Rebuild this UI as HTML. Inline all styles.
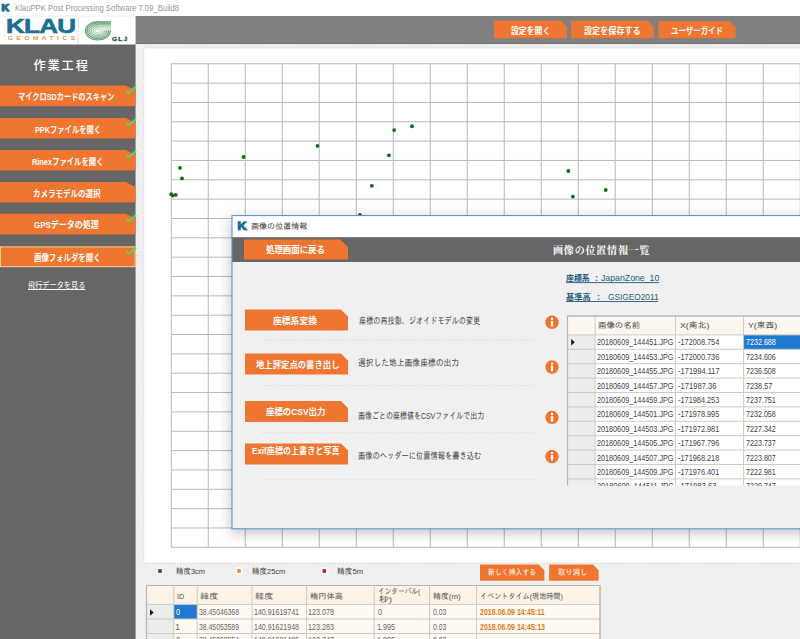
<!DOCTYPE html>
<html lang="ja"><head><meta charset="utf-8"><title>KlauPPK Post Processing Software 7.09_Build8</title>
<style>
html,body{margin:0;padding:0;}
body{width:800px;height:639px;overflow:hidden;position:relative;background:#fff;font-family:"Liberation Sans","Noto Sans CJK JP",sans-serif;}
svg{position:absolute;left:0;top:0;display:block;}
.t{position:absolute;white-space:nowrap;margin:0;padding:0;transform-origin:0 50%;}
#dshadow{position:absolute;left:232px;top:216px;width:600px;height:313px;box-shadow:0 3px 12px 1px rgba(0,0,0,.24);}
#dtab{position:absolute;left:0;top:0;width:800px;height:485.5px;overflow:hidden;}
</style></head><body>
<svg width="800" height="639" viewBox="0 0 800 639">
<rect x="0" y="0" width="800" height="639" fill="#ffffff"/>
<rect x="0" y="15.6" width="136" height="0.8" fill="#e9e9e9"/>
<rect x="135.6" y="16" width="664.4" height="28" fill="#808080"/>
<rect x="135.6" y="43" width="664.4" height="1.2" fill="#6f6f6f"/>
<rect x="135.6" y="44.2" width="664.4" height="595" fill="#efefef"/>
<rect x="0" y="44.5" width="135.6" height="595" fill="#666666"/>
<rect x="143.75" y="48" width="670" height="515" fill="#ffffff" stroke="#d0d0d0" stroke-width="1" stroke-dasharray="1.2,1.6"/>
<line x1="171.25" y1="63.75" x2="171.25" y2="547.3" stroke="#b9b9b9" stroke-width="1"/>
<line x1="208.25" y1="63.75" x2="208.25" y2="547.3" stroke="#b9b9b9" stroke-width="1"/>
<line x1="245.25" y1="63.75" x2="245.25" y2="547.3" stroke="#b9b9b9" stroke-width="1"/>
<line x1="282.25" y1="63.75" x2="282.25" y2="547.3" stroke="#b9b9b9" stroke-width="1"/>
<line x1="319.25" y1="63.75" x2="319.25" y2="547.3" stroke="#b9b9b9" stroke-width="1"/>
<line x1="356.25" y1="63.75" x2="356.25" y2="547.3" stroke="#b9b9b9" stroke-width="1"/>
<line x1="393.25" y1="63.75" x2="393.25" y2="547.3" stroke="#b9b9b9" stroke-width="1"/>
<line x1="430.25" y1="63.75" x2="430.25" y2="547.3" stroke="#b9b9b9" stroke-width="1"/>
<line x1="467.25" y1="63.75" x2="467.25" y2="547.3" stroke="#b9b9b9" stroke-width="1"/>
<line x1="504.25" y1="63.75" x2="504.25" y2="547.3" stroke="#b9b9b9" stroke-width="1"/>
<line x1="541.25" y1="63.75" x2="541.25" y2="547.3" stroke="#b9b9b9" stroke-width="1"/>
<line x1="578.25" y1="63.75" x2="578.25" y2="547.3" stroke="#b9b9b9" stroke-width="1"/>
<line x1="615.25" y1="63.75" x2="615.25" y2="547.3" stroke="#b9b9b9" stroke-width="1"/>
<line x1="652.25" y1="63.75" x2="652.25" y2="547.3" stroke="#b9b9b9" stroke-width="1"/>
<line x1="689.25" y1="63.75" x2="689.25" y2="547.3" stroke="#b9b9b9" stroke-width="1"/>
<line x1="726.25" y1="63.75" x2="726.25" y2="547.3" stroke="#b9b9b9" stroke-width="1"/>
<line x1="763.25" y1="63.75" x2="763.25" y2="547.3" stroke="#b9b9b9" stroke-width="1"/>
<line x1="800.25" y1="63.75" x2="800.25" y2="547.3" stroke="#b9b9b9" stroke-width="1"/>
<line x1="171.25" y1="63.75" x2="800" y2="63.75" stroke="#b9b9b9" stroke-width="1"/>
<line x1="171.25" y1="83.09" x2="800" y2="83.09" stroke="#b9b9b9" stroke-width="1"/>
<line x1="171.25" y1="102.43" x2="800" y2="102.43" stroke="#b9b9b9" stroke-width="1"/>
<line x1="171.25" y1="121.78" x2="800" y2="121.78" stroke="#b9b9b9" stroke-width="1"/>
<line x1="171.25" y1="141.12" x2="800" y2="141.12" stroke="#b9b9b9" stroke-width="1"/>
<line x1="171.25" y1="160.46" x2="800" y2="160.46" stroke="#b9b9b9" stroke-width="1"/>
<line x1="171.25" y1="179.80" x2="800" y2="179.80" stroke="#b9b9b9" stroke-width="1"/>
<line x1="171.25" y1="199.14" x2="800" y2="199.14" stroke="#b9b9b9" stroke-width="1"/>
<line x1="171.25" y1="218.49" x2="800" y2="218.49" stroke="#b9b9b9" stroke-width="1"/>
<line x1="171.25" y1="237.83" x2="800" y2="237.83" stroke="#b9b9b9" stroke-width="1"/>
<line x1="171.25" y1="257.17" x2="800" y2="257.17" stroke="#b9b9b9" stroke-width="1"/>
<line x1="171.25" y1="276.51" x2="800" y2="276.51" stroke="#b9b9b9" stroke-width="1"/>
<line x1="171.25" y1="295.85" x2="800" y2="295.85" stroke="#b9b9b9" stroke-width="1"/>
<line x1="171.25" y1="315.20" x2="800" y2="315.20" stroke="#b9b9b9" stroke-width="1"/>
<line x1="171.25" y1="334.54" x2="800" y2="334.54" stroke="#b9b9b9" stroke-width="1"/>
<line x1="171.25" y1="353.88" x2="800" y2="353.88" stroke="#b9b9b9" stroke-width="1"/>
<line x1="171.25" y1="373.22" x2="800" y2="373.22" stroke="#b9b9b9" stroke-width="1"/>
<line x1="171.25" y1="392.56" x2="800" y2="392.56" stroke="#b9b9b9" stroke-width="1"/>
<line x1="171.25" y1="411.91" x2="800" y2="411.91" stroke="#b9b9b9" stroke-width="1"/>
<line x1="171.25" y1="431.25" x2="800" y2="431.25" stroke="#b9b9b9" stroke-width="1"/>
<line x1="171.25" y1="450.59" x2="800" y2="450.59" stroke="#b9b9b9" stroke-width="1"/>
<line x1="171.25" y1="469.93" x2="800" y2="469.93" stroke="#b9b9b9" stroke-width="1"/>
<line x1="171.25" y1="489.27" x2="800" y2="489.27" stroke="#b9b9b9" stroke-width="1"/>
<line x1="171.25" y1="508.62" x2="800" y2="508.62" stroke="#b9b9b9" stroke-width="1"/>
<line x1="171.25" y1="527.96" x2="800" y2="527.96" stroke="#b9b9b9" stroke-width="1"/>
<line x1="171.25" y1="547.30" x2="800" y2="547.30" stroke="#b9b9b9" stroke-width="1"/>
<circle cx="171.2" cy="194.2" r="1.9" fill="#0d6b0d"/>
<circle cx="172.8" cy="195.6" r="1.9" fill="#0d6b0d"/>
<circle cx="175.8" cy="194.9" r="1.9" fill="#0d6b0d"/>
<circle cx="180" cy="167.9" r="1.9" fill="#0d6b0d"/>
<circle cx="182" cy="178.4" r="1.9" fill="#0d6b0d"/>
<circle cx="243.6" cy="157" r="1.9" fill="#0d6b0d"/>
<circle cx="317.5" cy="145.9" r="1.9" fill="#0d6b0d"/>
<circle cx="371.8" cy="185.8" r="1.9" fill="#0d6b0d"/>
<circle cx="388.9" cy="155.3" r="1.9" fill="#0d6b0d"/>
<circle cx="394.2" cy="130.1" r="1.9" fill="#0d6b0d"/>
<circle cx="412" cy="126.25" r="1.9" fill="#0d6b0d"/>
<circle cx="359.9" cy="215" r="1.9" fill="#0d6b0d"/>
<circle cx="568.3" cy="171" r="1.9" fill="#0d6b0d"/>
<circle cx="572.9" cy="196.6" r="1.9" fill="#0d6b0d"/>
<circle cx="605.75" cy="190" r="1.9" fill="#0d6b0d"/>
<polygon points="494,20.8 561,20.8 567,26.8 567,38.2 494,38.2" fill="#ef7630"/>
<polygon points="571.2,20.8 647.8000000000001,20.8 653.8000000000001,26.8 653.8000000000001,38.2 571.2,38.2" fill="#ef7630"/>
<polygon points="658.3,21.3 729.5999999999999,21.3 735.5999999999999,27.3 735.5999999999999,38.2 658.3,38.2" fill="#ef7630"/>
<polygon points="0,85.5 125.6,85.5 135.6,90.5 135.6,106.2 0,106.2" fill="#ef7630"/>
<polyline points="126.6,90.4 129.1,92.9 136,86.4" fill="none" stroke="#5fd45f" stroke-width="1.9"/>
<polygon points="0,117.9 125.6,117.9 135.6,122.9 135.6,138.6 0,138.6" fill="#ef7630"/>
<polyline points="126.6,122.80000000000001 129.1,125.30000000000001 136,118.80000000000001" fill="none" stroke="#5fd45f" stroke-width="1.9"/>
<polygon points="0,149.9 125.6,149.9 135.6,154.9 135.6,170.6 0,170.6" fill="#ef7630"/>
<polyline points="126.6,154.8 129.1,157.3 136,150.8" fill="none" stroke="#5fd45f" stroke-width="1.9"/>
<polygon points="0,181.9 125.6,181.9 135.6,186.9 135.6,202.6 0,202.6" fill="#ef7630"/>
<polygon points="0,213.8 125.6,213.8 135.6,218.8 135.6,234.5 0,234.5" fill="#ef7630"/>
<polyline points="126.6,218.70000000000002 129.1,221.20000000000002 136,214.70000000000002" fill="none" stroke="#5fd45f" stroke-width="1.9"/>
<rect x="0.5" y="246.9" width="134.6" height="19.8" fill="#ef7630" stroke="#f6d98c" stroke-width="1"/>
<polyline points="126.6,251.5 129.1,254.0 136,247.5" fill="none" stroke="#5fd45f" stroke-width="1.9"/>
<path d="M1.9 4 h2.5 v2.6 l2.4-2.6 h2.9 l-3.1 3.2 3.3 4.1 h-3.1 l-2-2.7 -0.4 0.4 v2.3 h-2.5z" fill="#1c6e8c" stroke="#1c6e8c" stroke-width="0.6" stroke-linejoin="round"/>
<rect x="77.8" y="17" width="0.8" height="27" fill="#d8d8d8"/>
<defs><radialGradient id="gg" cx="0.5" cy="0.52" r="0.56"><stop offset="0" stop-color="#ffffff"/><stop offset="0.25" stop-color="#eef7ee"/><stop offset="0.65" stop-color="#c4dfc8"/><stop offset="1" stop-color="#86b890"/></radialGradient><clipPath id="gc"><path d="M97.9 21.1 H111 V30.8 A13.1 9.75 0 1 1 97.9 21.1 Z"/></clipPath></defs>
<path d="M97.9 21.1 H111 V30.8 A13.1 9.75 0 1 1 97.9 21.1 Z" fill="url(#gg)"/>
<g clip-path="url(#gc)"><ellipse cx="97.9" cy="30.85" rx="12.70" ry="9.40" fill="none" stroke="#3f8353" stroke-opacity="0.85" stroke-width="0.85"/><ellipse cx="97.9" cy="30.85" rx="10.70" ry="7.92" fill="none" stroke="#3f8353" stroke-opacity="0.74" stroke-width="0.85"/><ellipse cx="97.9" cy="30.85" rx="8.70" ry="6.44" fill="none" stroke="#3f8353" stroke-opacity="0.63" stroke-width="0.85"/><ellipse cx="97.9" cy="30.85" rx="6.70" ry="4.96" fill="none" stroke="#3f8353" stroke-opacity="0.52" stroke-width="0.85"/><ellipse cx="97.9" cy="30.85" rx="4.70" ry="3.48" fill="none" stroke="#3f8353" stroke-opacity="0.41" stroke-width="0.85"/><ellipse cx="97.9" cy="30.85" rx="2.70" ry="2.00" fill="none" stroke="#3f8353" stroke-opacity="0.30" stroke-width="0.85"/><rect x="97.9" y="21" width="14" height="3.6" fill="#7fb48a"/><rect x="97.9" y="24.6" width="14" height="2.6" fill="#b5d6ba"/><rect x="99.5" y="27.2" width="12" height="3.4" fill="#e2f0e3" fill-opacity="0.85"/></g>
<rect x="156.5" y="567.5" width="7" height="7" fill="#ffffff"/>
<rect x="158.2" y="569.2" width="3.6" height="3.6" fill="#0d5f0d"/>
<rect x="235.5" y="567.5" width="7" height="7" fill="#ffffff"/>
<rect x="237.2" y="569.2" width="3.6" height="3.6" fill="#e8873a"/>
<rect x="320.8" y="567.5" width="7" height="7" fill="#ffffff"/>
<rect x="322.5" y="569.2" width="3.6" height="3.6" fill="#c0202a"/>
<polygon points="480,564.5 538.6,564.5 544.4,570.3 544.4,580.7 480,580.7" fill="#ef7630"/>
<polygon points="549.1,564.5 592.8000000000001,564.5 598.6,570.3 598.6,580.7 549.1,580.7" fill="#ef7630"/>
<rect x="146.5" y="585.5" width="453.5" height="18.899999999999977" fill="#fcf3e5"/>
<rect x="146.5" y="604.4" width="453.5" height="43.60000000000002" fill="#fef9f2"/>
<rect x="146.5" y="604.4" width="27.30000000000001" height="43.60000000000002" fill="#ececec"/>
<rect x="173.8" y="604.4" width="23.399999999999977" height="14.600000000000023" fill="#1f78d1"/>
<line x1="146.5" y1="585.5" x2="146.5" y2="648" stroke="#cfcac2" stroke-width="1"/>
<line x1="173.8" y1="585.5" x2="173.8" y2="648" stroke="#cfcac2" stroke-width="1"/>
<line x1="197.2" y1="585.5" x2="197.2" y2="648" stroke="#cfcac2" stroke-width="1"/>
<line x1="252" y1="585.5" x2="252" y2="648" stroke="#cfcac2" stroke-width="1"/>
<line x1="306.6" y1="585.5" x2="306.6" y2="648" stroke="#cfcac2" stroke-width="1"/>
<line x1="374.2" y1="585.5" x2="374.2" y2="648" stroke="#cfcac2" stroke-width="1"/>
<line x1="429.6" y1="585.5" x2="429.6" y2="648" stroke="#cfcac2" stroke-width="1"/>
<line x1="476.5" y1="585.5" x2="476.5" y2="648" stroke="#cfcac2" stroke-width="1"/>
<line x1="600" y1="585.5" x2="600" y2="648" stroke="#cfcac2" stroke-width="1"/>
<line x1="146.5" y1="585.5" x2="600" y2="585.5" stroke="#cfcac2" stroke-width="1"/>
<line x1="146.5" y1="604.4" x2="600" y2="604.4" stroke="#cfcac2" stroke-width="1"/>
<line x1="146.5" y1="619" x2="600" y2="619" stroke="#cfcac2" stroke-width="1"/>
<line x1="146.5" y1="633.5" x2="600" y2="633.5" stroke="#cfcac2" stroke-width="1"/>
<path d="M146.5 640 V585.5 H600 V640" fill="none" stroke="#b4b4b4" stroke-width="1.1"/>
<polygon points="150,609.2 150,615.8 153.6,612.5" fill="#111"/>
</svg>
<span id="t0" class="t" style="font-family:'Liberation Sans','Noto Sans CJK JP',sans-serif;font-size:8.8px;font-weight:bold;color:#fff;left:511.00px;top:25.14px;line-height:12.32px;transform:scaleX(0.8932);">設定を開く</span>
<span id="t1" class="t" style="font-family:'Liberation Sans','Noto Sans CJK JP',sans-serif;font-size:8.8px;font-weight:bold;color:#fff;left:584.00px;top:25.14px;line-height:12.32px;transform:scaleX(0.9201);">設定を保存する</span>
<span id="t2" class="t" style="font-family:'Liberation Sans','Noto Sans CJK JP',sans-serif;font-size:8.8px;font-weight:bold;color:#fff;left:670.50px;top:24.94px;line-height:12.32px;transform:scaleX(0.8468);">ユーザーガイド</span>
<span id="t3" class="t" style="font-family:'Liberation Sans','Noto Sans CJK JP',sans-serif;font-size:9.3px;font-weight:bold;color:#fff;left:18.25px;top:90.99px;line-height:13.02px;transform:scaleX(0.7756);">マイクロSDカードのスキャン</span>
<span id="t4" class="t" style="font-family:'Liberation Sans','Noto Sans CJK JP',sans-serif;font-size:9.3px;font-weight:bold;color:#fff;left:35.00px;top:123.59px;line-height:13.02px;transform:scaleX(0.7852);">PPKファイルを開く</span>
<span id="t5" class="t" style="font-family:'Liberation Sans','Noto Sans CJK JP',sans-serif;font-size:9.3px;font-weight:bold;color:#fff;left:32.25px;top:155.59px;line-height:13.02px;transform:scaleX(0.7910);">Rinexファイルを開く</span>
<span id="t6" class="t" style="font-family:'Liberation Sans','Noto Sans CJK JP',sans-serif;font-size:9.3px;font-weight:bold;color:#fff;left:33.00px;top:187.59px;line-height:13.02px;transform:scaleX(0.8074);">カメラモデルの選択</span>
<span id="t7" class="t" style="font-family:'Liberation Sans','Noto Sans CJK JP',sans-serif;font-size:9.3px;font-weight:bold;color:#fff;left:34.00px;top:219.19px;line-height:13.02px;transform:scaleX(0.8587);">GPSデータの処理</span>
<span id="t8" class="t" style="font-family:'Liberation Sans','Noto Sans CJK JP',sans-serif;font-size:9.3px;font-weight:bold;color:#fff;left:34.00px;top:252.39px;line-height:13.02px;transform:scaleX(0.7951);">画像フォルダを開く</span>
<span id="t9" class="t" style="font-family:'Liberation Sans','Noto Sans CJK JP',sans-serif;font-size:12.2px;font-weight:500;color:#fff;left:33.50px;top:57.96px;line-height:17.08px;letter-spacing:1.867px;">作業工程</span>
<span id="t10" class="t" style="font-family:'Liberation Sans','Noto Sans CJK JP',sans-serif;font-size:8.5px;font-weight:normal;color:#fff;left:27.50px;top:280.05px;line-height:11.9px;transform:scaleX(0.8426);text-decoration:underline;">飛行データを見る</span>
<span id="t11" class="t" style="font-family:'Liberation Sans','Noto Sans CJK JP',sans-serif;font-size:8.8px;font-weight:normal;color:#979797;left:15.00px;top:1.64px;line-height:12.32px;transform:scaleX(0.8764);">KlauPPK Post Processing Software 7.09_Build8</span>
<span id="t12" class="t" style="font-family:'Liberation Sans',sans-serif;font-size:19.4px;font-weight:bold;color:#1b6f90;left:6.00px;top:13.22px;line-height:27.16px;transform:scaleX(1.3441);-webkit-text-stroke:0.6px #1b6f90;letter-spacing:-0.6px;">KLAU</span>
<span id="t13" class="t" style="font-family:'Liberation Sans',sans-serif;font-size:6.2px;font-weight:normal;color:#dc8428;left:8.00px;top:34.46px;line-height:8.68px;letter-spacing:3.775px;-webkit-text-stroke:0.15px #dc8428;">GEOMATICS</span>
<span id="t14" class="t" style="font-family:'Liberation Sans',sans-serif;font-size:4.8px;font-weight:bold;color:#2f5a42;left:112.00px;top:37.24px;line-height:6.72px;transform:scaleX(1.4021);letter-spacing:0.8px;-webkit-text-stroke:0.3px #2f5a42;">GLJ</span>
<span id="t15" class="t" style="font-family:'Liberation Sans','IPAGothic','Noto Sans CJK JP',sans-serif;font-size:8px;font-weight:normal;color:#444;left:175.50px;top:566.10px;line-height:11.2px;transform:scaleX(0.9339);">精度3cm</span>
<span id="t16" class="t" style="font-family:'Liberation Sans','IPAGothic','Noto Sans CJK JP',sans-serif;font-size:8px;font-weight:normal;color:#444;left:252.00px;top:566.10px;line-height:11.2px;transform:scaleX(0.9374);">精度25cm</span>
<span id="t17" class="t" style="font-family:'Liberation Sans','IPAGothic','Noto Sans CJK JP',sans-serif;font-size:8px;font-weight:normal;color:#444;left:336.50px;top:566.10px;line-height:11.2px;transform:scaleX(0.9630);">精度5m</span>
<span id="t18" class="t" style="font-family:'Liberation Sans','IPAGothic','Noto Sans CJK JP',sans-serif;font-size:8px;font-weight:normal;color:#fff;left:487.50px;top:567.30px;line-height:11.2px;transform:scaleX(0.8596);">新しく挿入する</span>
<span id="t19" class="t" style="font-family:'Liberation Sans','IPAGothic','Noto Sans CJK JP',sans-serif;font-size:8px;font-weight:normal;color:#fff;left:558.25px;top:567.30px;line-height:11.2px;transform:scaleX(0.9204);">取り消し</span>
<span id="t20" class="t" style="font-family:'Liberation Sans','IPAGothic','Noto Sans CJK JP',sans-serif;font-size:8px;font-weight:normal;color:#555;left:177.00px;top:590.90px;line-height:11.2px;transform:scaleX(0.9056);">ID</span>
<span id="t21" class="t" style="font-family:'Liberation Sans','IPAGothic','Noto Sans CJK JP',sans-serif;font-size:8px;font-weight:normal;color:#555;left:199.50px;top:590.90px;line-height:11.2px;transform:scaleX(1.1489);">緯度</span>
<span id="t22" class="t" style="font-family:'Liberation Sans','IPAGothic','Noto Sans CJK JP',sans-serif;font-size:8px;font-weight:normal;color:#555;left:254.50px;top:590.90px;line-height:11.2px;transform:scaleX(1.1489);">経度</span>
<span id="t23" class="t" style="font-family:'Liberation Sans','IPAGothic','Noto Sans CJK JP',sans-serif;font-size:8px;font-weight:normal;color:#555;left:310.00px;top:590.90px;line-height:11.2px;transform:scaleX(1.0327);">楕円体高</span>
<span id="t24" class="t" style="font-family:'Liberation Sans','IPAGothic','Noto Sans CJK JP',sans-serif;font-size:8px;font-weight:normal;color:#555;left:377.50px;top:585.90px;line-height:11.2px;transform:scaleX(0.8322);">インターバル(</span>
<span id="t25" class="t" style="font-family:'Liberation Sans','IPAGothic','Noto Sans CJK JP',sans-serif;font-size:8px;font-weight:normal;color:#555;left:378.50px;top:594.30px;line-height:11.2px;transform:scaleX(1.2227);">秒)</span>
<span id="t26" class="t" style="font-family:'Liberation Sans','IPAGothic','Noto Sans CJK JP',sans-serif;font-size:8px;font-weight:normal;color:#555;left:433.00px;top:590.90px;line-height:11.2px;transform:scaleX(0.9862);">精度(m)</span>
<span id="t27" class="t" style="font-family:'Liberation Sans','IPAGothic','Noto Sans CJK JP',sans-serif;font-size:8px;font-weight:normal;color:#555;left:480.00px;top:590.90px;line-height:11.2px;transform:scaleX(0.8870);">イベントタイム(現地時間)</span>
<span id="t28" class="t" style="font-family:'Liberation Sans','IPAGothic','Noto Sans CJK JP',sans-serif;font-size:8.6px;font-weight:normal;color:#fff;left:176.00px;top:605.98px;line-height:12.04px;transform:scaleX(0.8688);">0</span>
<span id="t29" class="t" style="font-family:'Liberation Sans','IPAGothic','Noto Sans CJK JP',sans-serif;font-size:8.6px;font-weight:normal;color:#666;left:199.00px;top:605.98px;line-height:12.04px;transform:scaleX(0.7964);">38.45046368</span>
<span id="t30" class="t" style="font-family:'Liberation Sans','IPAGothic','Noto Sans CJK JP',sans-serif;font-size:8.6px;font-weight:normal;color:#666;left:254.00px;top:605.98px;line-height:12.04px;transform:scaleX(0.8187);">140.91619741</span>
<span id="t31" class="t" style="font-family:'Liberation Sans','IPAGothic','Noto Sans CJK JP',sans-serif;font-size:8.6px;font-weight:normal;color:#666;left:308.00px;top:605.98px;line-height:12.04px;transform:scaleX(0.8406);">123.078</span>
<span id="t32" class="t" style="font-family:'Liberation Sans','IPAGothic','Noto Sans CJK JP',sans-serif;font-size:8.6px;font-weight:normal;color:#666;left:377.50px;top:605.98px;line-height:12.04px;transform:scaleX(0.8688);">0</span>
<span id="t33" class="t" style="font-family:'Liberation Sans','IPAGothic','Noto Sans CJK JP',sans-serif;font-size:8.6px;font-weight:normal;color:#666;left:432.50px;top:605.98px;line-height:12.04px;transform:scaleX(0.7909);">0.03</span>
<span id="t34" class="t" style="font-family:'Liberation Sans',sans-serif;font-size:8.8px;font-weight:bold;color:#e07a22;left:480.00px;top:606.24px;line-height:12.32px;transform:scaleX(0.7952);">2018.06.09 14:45:11</span>
<span id="t35" class="t" style="font-family:'Liberation Sans','IPAGothic','Noto Sans CJK JP',sans-serif;font-size:8.6px;font-weight:normal;color:#666;left:175.00px;top:620.58px;line-height:12.04px;transform:scaleX(1.0860);">1</span>
<span id="t36" class="t" style="font-family:'Liberation Sans','IPAGothic','Noto Sans CJK JP',sans-serif;font-size:8.6px;font-weight:normal;color:#666;left:199.00px;top:620.58px;line-height:12.04px;transform:scaleX(0.7964);">38.45053589</span>
<span id="t37" class="t" style="font-family:'Liberation Sans','IPAGothic','Noto Sans CJK JP',sans-serif;font-size:8.6px;font-weight:normal;color:#666;left:254.00px;top:620.58px;line-height:12.04px;transform:scaleX(0.8187);">140.91621948</span>
<span id="t38" class="t" style="font-family:'Liberation Sans','IPAGothic','Noto Sans CJK JP',sans-serif;font-size:8.6px;font-weight:normal;color:#666;left:308.00px;top:620.58px;line-height:12.04px;transform:scaleX(0.8406);">123.283</span>
<span id="t39" class="t" style="font-family:'Liberation Sans','IPAGothic','Noto Sans CJK JP',sans-serif;font-size:8.6px;font-weight:normal;color:#666;left:376.50px;top:620.58px;line-height:12.04px;transform:scaleX(0.8412);">1.995</span>
<span id="t40" class="t" style="font-family:'Liberation Sans','IPAGothic','Noto Sans CJK JP',sans-serif;font-size:8.6px;font-weight:normal;color:#666;left:432.50px;top:620.58px;line-height:12.04px;transform:scaleX(0.7909);">0.03</span>
<span id="t41" class="t" style="font-family:'Liberation Sans',sans-serif;font-size:8.8px;font-weight:bold;color:#e07a22;left:480.00px;top:620.84px;line-height:12.32px;transform:scaleX(0.7952);">2018.06.09 14:45:13</span>
<span id="t42" class="t" style="font-family:'Liberation Sans','IPAGothic','Noto Sans CJK JP',sans-serif;font-size:8.6px;font-weight:normal;color:#666;left:176.00px;top:634.38px;line-height:12.04px;transform:scaleX(0.8688);">2</span>
<span id="t43" class="t" style="font-family:'Liberation Sans','IPAGothic','Noto Sans CJK JP',sans-serif;font-size:8.6px;font-weight:normal;color:#666;left:199.00px;top:634.38px;line-height:12.04px;transform:scaleX(0.7964);">38.45059554</span>
<span id="t44" class="t" style="font-family:'Liberation Sans','IPAGothic','Noto Sans CJK JP',sans-serif;font-size:8.6px;font-weight:normal;color:#666;left:254.00px;top:634.38px;line-height:12.04px;transform:scaleX(0.8187);">140.91621486</span>
<span id="t45" class="t" style="font-family:'Liberation Sans','IPAGothic','Noto Sans CJK JP',sans-serif;font-size:8.6px;font-weight:normal;color:#666;left:308.00px;top:634.38px;line-height:12.04px;transform:scaleX(0.8406);">123.347</span>
<span id="t46" class="t" style="font-family:'Liberation Sans','IPAGothic','Noto Sans CJK JP',sans-serif;font-size:8.6px;font-weight:normal;color:#666;left:376.50px;top:634.38px;line-height:12.04px;transform:scaleX(0.8412);">1.995</span>
<span id="t47" class="t" style="font-family:'Liberation Sans','IPAGothic','Noto Sans CJK JP',sans-serif;font-size:8.6px;font-weight:normal;color:#666;left:432.50px;top:634.38px;line-height:12.04px;transform:scaleX(0.7909);">0.03</span>
<span id="t48" class="t" style="font-family:'Liberation Sans',sans-serif;font-size:8.8px;font-weight:bold;color:#e07a22;left:480.00px;top:635.64px;line-height:12.32px;transform:scaleX(0.7952);">2018.06.09 14:45:15</span>
<div id="dshadow"></div>
<svg width="800" height="639" viewBox="0 0 800 639">
<rect x="232" y="215.6" width="580" height="313.19999999999993" fill="#f0f0f0"/>
<rect x="232" y="215.6" width="580" height="21.6" fill="#ffffff"/>
<rect x="232" y="237.2" width="580" height="24.8" fill="#666666"/>
<rect x="232" y="215.6" width="580" height="313.19999999999993" fill="none" stroke="#4b8fd6" stroke-width="1"/>
<path d="M238 221.6 h2.6 v3.2 l3.2-3.2 h3.2 l-3.9 3.8 4.3 4.6 h-3.4 l-2.8-3.2 -0.6 0.6 v2.6 h-2.6z" fill="#1c6e8c" stroke="#1c6e8c" stroke-width="0.6" stroke-linejoin="round"/>
<polygon points="244,239.6 340,239.6 348,247.0 348,259.6 244,259.6" fill="#ef7630"/>
<polygon points="245,309.4 341,309.4 348,316.4 348,330.4 245,330.4" fill="#ef7630"/>
<polygon points="245,353.6 341,353.6 348,360.6 348,374.6 245,374.6" fill="#ef7630"/>
<polygon points="245,401 341,401 348,408 348,422 245,422" fill="#ef7630"/>
<polygon points="245,443.4 341,443.4 348,450.4 348,464.4 245,464.4" fill="#ef7630"/>
<line x1="262" y1="340.2" x2="535.5" y2="340.2" stroke="#dcdcdc" stroke-width="1" stroke-dasharray="1.5,1.5"/>
<line x1="262" y1="385.6" x2="535.5" y2="385.6" stroke="#dcdcdc" stroke-width="1" stroke-dasharray="1.5,1.5"/>
<line x1="262" y1="432.8" x2="535.5" y2="432.8" stroke="#dcdcdc" stroke-width="1" stroke-dasharray="1.5,1.5"/>
<line x1="262" y1="479.8" x2="535.5" y2="479.8" stroke="#dcdcdc" stroke-width="1" stroke-dasharray="1.5,1.5"/>
<circle cx="552" cy="322.2" r="6.7" fill="#ef7630"/>
<circle cx="552" cy="318.8" r="1.25" fill="#fff"/>
<rect x="550.9" y="320.9" width="2.2" height="5.6" fill="#fff"/>
<circle cx="552" cy="367" r="6.7" fill="#ef7630"/>
<circle cx="552" cy="363.6" r="1.25" fill="#fff"/>
<rect x="550.9" y="365.7" width="2.2" height="5.6" fill="#fff"/>
<circle cx="552" cy="417.4" r="6.7" fill="#ef7630"/>
<circle cx="552" cy="414.0" r="1.25" fill="#fff"/>
<rect x="550.9" y="416.09999999999997" width="2.2" height="5.6" fill="#fff"/>
<circle cx="552" cy="456.5" r="6.7" fill="#ef7630"/>
<circle cx="552" cy="453.1" r="1.25" fill="#fff"/>
<rect x="550.9" y="455.2" width="2.2" height="5.6" fill="#fff"/>
<clipPath id="tc"><rect x="560" y="310" width="240" height="175.5"/></clipPath>
<g clip-path="url(#tc)"><rect x="567.5" y="316" width="260" height="18.899999999999977" fill="#fdf8ef"/><rect x="567.5" y="334.9" width="260" height="200" fill="#ffffff"/><rect x="567.5" y="334.9" width="27.600000000000023" height="200" fill="#ececec"/><rect x="743.6" y="334.9" width="80" height="14.4" fill="#1f78d1"/><line x1="567.5" y1="316" x2="567.5" y2="500" stroke="#cfcac2" stroke-width="1"/><line x1="595.1" y1="316" x2="595.1" y2="500" stroke="#cfcac2" stroke-width="1"/><line x1="675.5" y1="316" x2="675.5" y2="500" stroke="#cfcac2" stroke-width="1"/><line x1="743.6" y1="316" x2="743.6" y2="500" stroke="#cfcac2" stroke-width="1"/><line x1="567.5" y1="316.00" x2="800" y2="316.00" stroke="#cfcac2" stroke-width="1"/><line x1="567.5" y1="334.90" x2="800" y2="334.90" stroke="#cfcac2" stroke-width="1"/><line x1="567.5" y1="349.30" x2="800" y2="349.30" stroke="#cfcac2" stroke-width="1"/><line x1="567.5" y1="363.70" x2="800" y2="363.70" stroke="#cfcac2" stroke-width="1"/><line x1="567.5" y1="378.10" x2="800" y2="378.10" stroke="#cfcac2" stroke-width="1"/><line x1="567.5" y1="392.50" x2="800" y2="392.50" stroke="#cfcac2" stroke-width="1"/><line x1="567.5" y1="406.90" x2="800" y2="406.90" stroke="#cfcac2" stroke-width="1"/><line x1="567.5" y1="421.30" x2="800" y2="421.30" stroke="#cfcac2" stroke-width="1"/><line x1="567.5" y1="435.70" x2="800" y2="435.70" stroke="#cfcac2" stroke-width="1"/><line x1="567.5" y1="450.10" x2="800" y2="450.10" stroke="#cfcac2" stroke-width="1"/><line x1="567.5" y1="464.50" x2="800" y2="464.50" stroke="#cfcac2" stroke-width="1"/><line x1="567.5" y1="478.90" x2="800" y2="478.90" stroke="#cfcac2" stroke-width="1"/><line x1="567.5" y1="493.30" x2="800" y2="493.30" stroke="#cfcac2" stroke-width="1"/><path d="M567.5 500 V316 H800" fill="none" stroke="#b4b4b4" stroke-width="1.2"/><polygon points="571.2,338.9 571.2,345.5 574.8,342.2" fill="#111"/></g>
<rect x="566" y="282.2" width="93" height="0.9" fill="#1f5d7e"/>
<rect x="566" y="301" width="92" height="0.9" fill="#1f5d7e"/>
</svg>
<span id="t49" class="t" style="font-family:'Liberation Sans','IPAGothic','Noto Sans CJK JP',sans-serif;font-size:8px;font-weight:normal;color:#333;left:251.00px;top:220.70px;line-height:11.2px;transform:scaleX(1.0075);">画像の位置情報</span>
<span id="t50" class="t" style="font-family:'Liberation Sans','Noto Sans CJK JP',sans-serif;font-size:9px;font-weight:bold;color:#fff;left:266.00px;top:244.20px;line-height:12.6px;transform:scaleX(0.9355);">処理画面に戻る</span>
<span id="t51" class="t" style="font-family:'Liberation Serif','Noto Serif CJK JP',serif;font-size:10px;font-weight:bold;color:#fff;left:553.00px;top:244.00px;line-height:14.0px;letter-spacing:0.825px;">画像の位置情報一覧</span>
<span id="t52" class="t" style="font-family:'Liberation Sans','Noto Sans CJK JP',sans-serif;font-size:8.2px;font-weight:bold;color:#1f5d7e;left:566.00px;top:273.26px;line-height:11.48px;transform:scaleX(0.9671);">座標系</span>
<span id="t53" class="t" style="font-family:'Liberation Sans','Noto Sans CJK JP',sans-serif;font-size:9px;font-weight:bold;color:#1f5d7e;left:595.00px;top:272.30px;line-height:12.6px;">:</span>
<span id="t54" class="t" style="font-family:'Liberation Sans','Noto Sans CJK JP',sans-serif;font-size:9.2px;font-weight:normal;color:#1f5d7e;left:601.00px;top:272.36px;line-height:12.88px;transform:scaleX(0.9508);">JapanZone_10</span>
<span id="t55" class="t" style="font-family:'Liberation Sans','Noto Sans CJK JP',sans-serif;font-size:8.2px;font-weight:bold;color:#1f5d7e;left:566.00px;top:292.26px;line-height:11.48px;">基準高</span>
<span id="t56" class="t" style="font-family:'Liberation Sans','Noto Sans CJK JP',sans-serif;font-size:9px;font-weight:bold;color:#1f5d7e;left:597.00px;top:291.30px;line-height:12.6px;">:</span>
<span id="t57" class="t" style="font-family:'Liberation Sans','Noto Sans CJK JP',sans-serif;font-size:9.2px;font-weight:normal;color:#1f5d7e;left:608.00px;top:291.36px;line-height:12.88px;transform:scaleX(0.9021);">GSIGEO2011</span>
<span id="t58" class="t" style="font-family:'Liberation Sans','Noto Sans CJK JP',sans-serif;font-size:9px;font-weight:bold;color:#fff;left:273.00px;top:315.00px;line-height:12.6px;transform:scaleX(0.9778);">座標系変換</span>
<span id="t59" class="t" style="font-family:'Liberation Sans','Noto Sans CJK JP',sans-serif;font-size:9px;font-weight:bold;color:#fff;left:256.00px;top:359.20px;line-height:12.6px;transform:scaleX(0.9281);">地上評定点の書き出し</span>
<span id="t60" class="t" style="font-family:'Liberation Sans','Noto Sans CJK JP',sans-serif;font-size:9px;font-weight:bold;color:#fff;left:266.00px;top:406.40px;line-height:12.6px;transform:scaleX(0.9365);">座標のCSV出力</span>
<span id="t61" class="t" style="font-family:'Liberation Sans','Noto Sans CJK JP',sans-serif;font-size:9px;font-weight:bold;color:#fff;left:252.00px;top:445.40px;line-height:12.6px;transform:scaleX(0.8969);">Exif座標の上書きと写真</span>
<span id="t62" class="t" style="font-family:'Liberation Sans','IPAGothic','Noto Sans CJK JP',sans-serif;font-size:9.4px;font-weight:normal;color:#444;left:359.00px;top:314.42px;line-height:13.16px;transform:scaleX(0.7608);">座標の再投影、ジオイドモデルの変更</span>
<span id="t63" class="t" style="font-family:'Liberation Sans','IPAGothic','Noto Sans CJK JP',sans-serif;font-size:9.4px;font-weight:normal;color:#444;left:358.00px;top:356.42px;line-height:13.16px;transform:scaleX(0.8284);">選択した地上画像座標の出力</span>
<span id="t64" class="t" style="font-family:'Liberation Sans','IPAGothic','Noto Sans CJK JP',sans-serif;font-size:9.4px;font-weight:normal;color:#444;left:358.00px;top:409.22px;line-height:13.16px;transform:scaleX(0.7453);">画像ごとの座標値をCSVファイルで出力</span>
<span id="t65" class="t" style="font-family:'Liberation Sans','IPAGothic','Noto Sans CJK JP',sans-serif;font-size:9.4px;font-weight:normal;color:#444;left:358.00px;top:448.82px;line-height:13.16px;transform:scaleX(0.7734);">画像のヘッダーに位置情報を書き込む</span>
<div id="dtab">
<span id="t66" class="t" style="font-family:'Liberation Sans','IPAGothic','Noto Sans CJK JP',sans-serif;font-size:8px;font-weight:normal;color:#444;left:597.50px;top:320.30px;line-height:11.2px;transform:scaleX(1.0530);">画像の名前</span>
<span id="t67" class="t" style="font-family:'Liberation Sans','IPAGothic','Noto Sans CJK JP',sans-serif;font-size:8px;font-weight:normal;color:#444;left:679.50px;top:320.30px;line-height:11.2px;transform:scaleX(1.1001);">X(南北)</span>
<span id="t68" class="t" style="font-family:'Liberation Sans','IPAGothic','Noto Sans CJK JP',sans-serif;font-size:8px;font-weight:normal;color:#444;left:747.50px;top:320.30px;line-height:11.2px;transform:scaleX(1.0932);">Y(東西)</span>
<span id="t69" class="t" style="font-family:'Liberation Sans','IPAGothic','Noto Sans CJK JP',sans-serif;font-size:8.7px;font-weight:normal;color:#444;left:596.50px;top:336.11px;line-height:12.18px;transform:scaleX(0.8330);">20180609_144451.JPG</span>
<span id="t70" class="t" style="font-family:'Liberation Sans','IPAGothic','Noto Sans CJK JP',sans-serif;font-size:8.7px;font-weight:normal;color:#444;left:678.00px;top:336.11px;line-height:12.18px;transform:scaleX(0.8462);">-172008.754</span>
<span id="t71" class="t" style="font-family:'Liberation Sans','IPAGothic','Noto Sans CJK JP',sans-serif;font-size:8.7px;font-weight:normal;color:#fff;left:746.00px;top:336.11px;line-height:12.18px;transform:scaleX(0.8226);">7232.688</span>
<span id="t72" class="t" style="font-family:'Liberation Sans','IPAGothic','Noto Sans CJK JP',sans-serif;font-size:8.7px;font-weight:normal;color:#444;left:596.50px;top:350.71px;line-height:12.18px;transform:scaleX(0.8330);">20180609_144453.JPG</span>
<span id="t73" class="t" style="font-family:'Liberation Sans','IPAGothic','Noto Sans CJK JP',sans-serif;font-size:8.7px;font-weight:normal;color:#444;left:678.00px;top:350.71px;line-height:12.18px;transform:scaleX(0.8462);">-172000.736</span>
<span id="t74" class="t" style="font-family:'Liberation Sans','IPAGothic','Noto Sans CJK JP',sans-serif;font-size:8.7px;font-weight:normal;color:#444;left:746.00px;top:350.71px;line-height:12.18px;transform:scaleX(0.8226);">7234.606</span>
<span id="t75" class="t" style="font-family:'Liberation Sans','IPAGothic','Noto Sans CJK JP',sans-serif;font-size:8.7px;font-weight:normal;color:#444;left:596.50px;top:365.31px;line-height:12.18px;transform:scaleX(0.8330);">20180609_144455.JPG</span>
<span id="t76" class="t" style="font-family:'Liberation Sans','IPAGothic','Noto Sans CJK JP',sans-serif;font-size:8.7px;font-weight:normal;color:#444;left:678.00px;top:365.31px;line-height:12.18px;transform:scaleX(0.8668);">-171994.117</span>
<span id="t77" class="t" style="font-family:'Liberation Sans','IPAGothic','Noto Sans CJK JP',sans-serif;font-size:8.7px;font-weight:normal;color:#444;left:746.00px;top:365.31px;line-height:12.18px;transform:scaleX(0.8226);">7236.508</span>
<span id="t78" class="t" style="font-family:'Liberation Sans','IPAGothic','Noto Sans CJK JP',sans-serif;font-size:8.7px;font-weight:normal;color:#444;left:596.50px;top:379.91px;line-height:12.18px;transform:scaleX(0.8330);">20180609_144457.JPG</span>
<span id="t79" class="t" style="font-family:'Liberation Sans','IPAGothic','Noto Sans CJK JP',sans-serif;font-size:8.7px;font-weight:normal;color:#444;left:678.00px;top:379.91px;line-height:12.18px;transform:scaleX(0.8734);">-171987.36</span>
<span id="t80" class="t" style="font-family:'Liberation Sans','IPAGothic','Noto Sans CJK JP',sans-serif;font-size:8.7px;font-weight:normal;color:#444;left:746.00px;top:379.91px;line-height:12.18px;transform:scaleX(0.8359);">7238.57</span>
<span id="t81" class="t" style="font-family:'Liberation Sans','IPAGothic','Noto Sans CJK JP',sans-serif;font-size:8.7px;font-weight:normal;color:#444;left:596.50px;top:393.51px;line-height:12.18px;transform:scaleX(0.8330);">20180609_144459.JPG</span>
<span id="t82" class="t" style="font-family:'Liberation Sans','IPAGothic','Noto Sans CJK JP',sans-serif;font-size:8.7px;font-weight:normal;color:#444;left:678.00px;top:393.51px;line-height:12.18px;transform:scaleX(0.8462);">-171984.253</span>
<span id="t83" class="t" style="font-family:'Liberation Sans','IPAGothic','Noto Sans CJK JP',sans-serif;font-size:8.7px;font-weight:normal;color:#444;left:746.00px;top:393.51px;line-height:12.18px;transform:scaleX(0.8226);">7237.751</span>
<span id="t84" class="t" style="font-family:'Liberation Sans','IPAGothic','Noto Sans CJK JP',sans-serif;font-size:8.7px;font-weight:normal;color:#444;left:596.50px;top:408.11px;line-height:12.18px;transform:scaleX(0.8330);">20180609_144501.JPG</span>
<span id="t85" class="t" style="font-family:'Liberation Sans','IPAGothic','Noto Sans CJK JP',sans-serif;font-size:8.7px;font-weight:normal;color:#444;left:678.00px;top:408.11px;line-height:12.18px;transform:scaleX(0.8462);">-171978.995</span>
<span id="t86" class="t" style="font-family:'Liberation Sans','IPAGothic','Noto Sans CJK JP',sans-serif;font-size:8.7px;font-weight:normal;color:#444;left:746.00px;top:408.11px;line-height:12.18px;transform:scaleX(0.8226);">7232.058</span>
<span id="t87" class="t" style="font-family:'Liberation Sans','IPAGothic','Noto Sans CJK JP',sans-serif;font-size:8.7px;font-weight:normal;color:#444;left:596.50px;top:422.71px;line-height:12.18px;transform:scaleX(0.8330);">20180609_144503.JPG</span>
<span id="t88" class="t" style="font-family:'Liberation Sans','IPAGothic','Noto Sans CJK JP',sans-serif;font-size:8.7px;font-weight:normal;color:#444;left:678.00px;top:422.71px;line-height:12.18px;transform:scaleX(0.8462);">-171972.981</span>
<span id="t89" class="t" style="font-family:'Liberation Sans','IPAGothic','Noto Sans CJK JP',sans-serif;font-size:8.7px;font-weight:normal;color:#444;left:746.00px;top:422.71px;line-height:12.18px;transform:scaleX(0.8226);">7227.342</span>
<span id="t90" class="t" style="font-family:'Liberation Sans','IPAGothic','Noto Sans CJK JP',sans-serif;font-size:8.7px;font-weight:normal;color:#444;left:596.50px;top:437.31px;line-height:12.18px;transform:scaleX(0.8330);">20180609_144505.JPG</span>
<span id="t91" class="t" style="font-family:'Liberation Sans','IPAGothic','Noto Sans CJK JP',sans-serif;font-size:8.7px;font-weight:normal;color:#444;left:678.00px;top:437.31px;line-height:12.18px;transform:scaleX(0.8462);">-171967.796</span>
<span id="t92" class="t" style="font-family:'Liberation Sans','IPAGothic','Noto Sans CJK JP',sans-serif;font-size:8.7px;font-weight:normal;color:#444;left:746.00px;top:437.31px;line-height:12.18px;transform:scaleX(0.8226);">7223.737</span>
<span id="t93" class="t" style="font-family:'Liberation Sans','IPAGothic','Noto Sans CJK JP',sans-serif;font-size:8.7px;font-weight:normal;color:#444;left:596.50px;top:451.91px;line-height:12.18px;transform:scaleX(0.8330);">20180609_144507.JPG</span>
<span id="t94" class="t" style="font-family:'Liberation Sans','IPAGothic','Noto Sans CJK JP',sans-serif;font-size:8.7px;font-weight:normal;color:#444;left:678.00px;top:451.91px;line-height:12.18px;transform:scaleX(0.8462);">-171968.218</span>
<span id="t95" class="t" style="font-family:'Liberation Sans','IPAGothic','Noto Sans CJK JP',sans-serif;font-size:8.7px;font-weight:normal;color:#444;left:746.00px;top:451.91px;line-height:12.18px;transform:scaleX(0.8226);">7223.807</span>
<span id="t96" class="t" style="font-family:'Liberation Sans','IPAGothic','Noto Sans CJK JP',sans-serif;font-size:8.7px;font-weight:normal;color:#444;left:596.50px;top:465.51px;line-height:12.18px;transform:scaleX(0.8330);">20180609_144509.JPG</span>
<span id="t97" class="t" style="font-family:'Liberation Sans','IPAGothic','Noto Sans CJK JP',sans-serif;font-size:8.7px;font-weight:normal;color:#444;left:678.00px;top:465.51px;line-height:12.18px;transform:scaleX(0.8462);">-171976.401</span>
<span id="t98" class="t" style="font-family:'Liberation Sans','IPAGothic','Noto Sans CJK JP',sans-serif;font-size:8.7px;font-weight:normal;color:#444;left:746.00px;top:465.51px;line-height:12.18px;transform:scaleX(0.8226);">7222.981</span>
<span id="t99" class="t" style="font-family:'Liberation Sans','IPAGothic','Noto Sans CJK JP',sans-serif;font-size:8.7px;font-weight:normal;color:#444;left:596.50px;top:480.11px;line-height:12.18px;transform:scaleX(0.8440);">20180609_144511.JPG</span>
<span id="t100" class="t" style="font-family:'Liberation Sans','IPAGothic','Noto Sans CJK JP',sans-serif;font-size:8.7px;font-weight:normal;color:#444;left:678.00px;top:480.11px;line-height:12.18px;transform:scaleX(0.8734);">-171983.63</span>
<span id="t101" class="t" style="font-family:'Liberation Sans','IPAGothic','Noto Sans CJK JP',sans-serif;font-size:8.7px;font-weight:normal;color:#444;left:746.00px;top:480.11px;line-height:12.18px;transform:scaleX(0.8226);">7229.747</span>
</div>
</body></html>
